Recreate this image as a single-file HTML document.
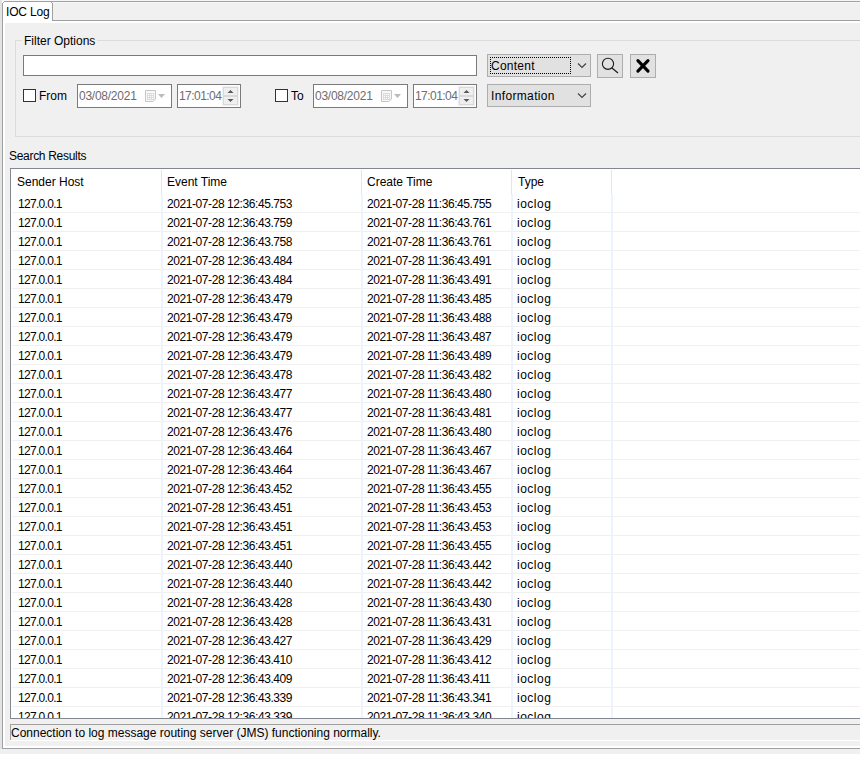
<!DOCTYPE html>
<html><head><meta charset="utf-8"><style>
html,body{margin:0;padding:0;}
body{width:864px;height:762px;position:relative;overflow:hidden;background:#fff;font-family:"Liberation Sans",sans-serif;}
body div{position:absolute;box-sizing:border-box;}
.t{font-size:12px;line-height:14px;white-space:nowrap;color:#000;}
.g{color:#6d6d6d;}
.d{letter-spacing:-0.42px;}
.ip{letter-spacing:-0.7px;}
</style></head><body>
<div style="left:0px;top:0px;width:2px;height:749px;background:#e3e3e3;"></div>
<div style="left:2px;top:0px;width:858px;height:1px;background:#f7f7f7;"></div>
<div style="left:0px;top:749px;width:860px;height:5px;background:#f0f0f0;"></div>
<div style="left:4px;top:1px;width:856px;height:1px;background:#a0a0a0;"></div>
<div style="left:2px;top:3px;width:1px;height:746px;background:#a0a0a0;"></div>
<div style="left:2px;top:748px;width:858px;height:1px;background:#a0a0a0;"></div>
<div style="left:3px;top:2px;width:49px;height:21px;background:#ffffff;"></div>
<div style="left:3px;top:21px;width:857px;height:2px;background:#ffffff;"></div>
<div style="left:3px;top:21px;width:2px;height:727px;background:#ffffff;"></div>
<div style="left:3px;top:746px;width:857px;height:2px;background:#ffffff;"></div>
<div style="left:5px;top:23px;width:855px;height:723px;background:#f0f0f0;"></div>
<div style="left:3px;top:2px;width:1px;height:1px;background:#a0a0a0;"></div>
<div style="left:52px;top:3px;width:808px;height:18px;background:#a0a0a0;"></div>
<div style="left:51px;top:2px;width:1px;height:1px;background:#a0a0a0;"></div>
<div style="left:52px;top:2px;width:1px;height:1px;background:#ececec;"></div>
<div style="left:53px;top:2px;width:807px;height:18px;background:#f0f0f0;"></div>
<div style="left:53px;top:2px;width:807px;height:1px;background:#f7f7f7;"></div>
<div class="t" style="left:6px;top:5px;letter-spacing:-0.15px">IOC Log</div>
<div style="left:15px;top:40px;width:7px;height:1px;background:#dcdcdc;"></div>
<div style="left:97px;top:40px;width:763px;height:1px;background:#dcdcdc;"></div>
<div style="left:15px;top:40px;width:1px;height:97px;background:#dcdcdc;"></div>
<div style="left:15px;top:136px;width:845px;height:1px;background:#dcdcdc;"></div>
<div class="t" style="left:24px;top:34px;">Filter Options</div>
<div style="left:23px;top:55px;width:454px;height:21px;background:#7a7a7a;"></div>
<div style="left:24px;top:56px;width:452px;height:19px;background:#ffffff;"></div>
<div style="left:487px;top:54px;width:104px;height:23px;background:#adadad;"></div>
<div style="left:488px;top:55px;width:102px;height:21px;background:#e1e1e1;"></div>
<div style="left:490px;top:57px;width:81px;height:17px;border:1px dotted #000;"></div>
<div class="t" style="left:491px;top:59px;letter-spacing:0.25px">Content</div>
<svg style="position:absolute;left:577px;top:62px" width="10" height="7"><path d="M1 1.5 L5 5.5 L9 1.5" fill="none" stroke="#404040" stroke-width="1.1"/></svg>
<div style="left:597px;top:54px;width:26px;height:24px;background:#adadad;"></div>
<div style="left:598px;top:55px;width:24px;height:22px;background:#e1e1e1;"></div>
<svg style="position:absolute;left:597px;top:54px" width="26" height="24"><circle cx="11" cy="9.8" r="5.6" fill="none" stroke="#1a1a1a" stroke-width="1.1"/><path d="M15 14 L21 19" stroke="#1a1a1a" stroke-width="1.2"/></svg>
<div style="left:630px;top:54px;width:26px;height:24px;background:#adadad;"></div>
<div style="left:631px;top:55px;width:24px;height:22px;background:#e1e1e1;"></div>
<svg style="position:absolute;left:630px;top:54px" width="26" height="24"><path d="M7.9 6.6 L18 17.1 M18 6.6 L7.9 17.1" stroke="#000" stroke-width="3.1" stroke-linecap="round"/></svg>
<div style="left:23px;top:89px;width:13px;height:13px;background:#333333;"></div>
<div style="left:24px;top:90px;width:11px;height:11px;background:#ffffff;"></div>
<div class="t" style="left:39px;top:89px;">From</div>
<div style="left:77px;top:84px;width:95px;height:24px;background:#7a7a7a;"></div>
<div style="left:78px;top:85px;width:93px;height:22px;background:#ffffff;"></div>
<div class="t g" style="left:79px;top:89px;letter-spacing:-0.25px">03/08/2021</div>
<svg style="position:absolute;left:144px;top:89px" width="22" height="14"><path d="M1.5 1.5H11.5V10L9 12.5H1.5Z" fill="#f6f8fc" stroke="#c9c3c3"/><rect x="3" y="4" width="7" height="7" fill="#dcdcdc"/><path d="M4 5h1v1h-1zM6 5h1v1h-1zM8 5h1v1h-1zM4 7h1v1h-1zM6 7h1v1h-1zM8 7h1v1h-1zM4 9h1v1h-1zM6 9h1v1h-1zM8 9h1v1h-1z" fill="#fff"/><path d="M14 5 L21 5 L17.5 9 Z" fill="#bbbcb4"/></svg>
<div style="left:177px;top:84px;width:64px;height:24px;background:#7a7a7a;"></div>
<div style="left:178px;top:85px;width:62px;height:22px;background:#ffffff;"></div>
<div class="t g" style="left:179px;top:89px;letter-spacing:-0.55px">17:01:04</div>
<div style="left:222px;top:86px;width:17px;height:20px;background:#f0f0f0;"></div>
<div style="left:223px;top:87px;width:15px;height:9px;background:#dadada;"></div>
<div style="left:224px;top:88px;width:13px;height:7px;background:#efefef;"></div>
<div style="left:223px;top:96px;width:15px;height:9px;background:#dadada;"></div>
<div style="left:224px;top:97px;width:13px;height:7px;background:#efefef;"></div>
<svg style="position:absolute;left:222px;top:86px" width="17" height="20"><path d="M5.5 7 L8.5 4 L11.5 7 Z" fill="#595959"/><path d="M5.5 13 L8.5 16 L11.5 13 Z" fill="#595959"/></svg>
<div style="left:275px;top:89px;width:13px;height:13px;background:#333333;"></div>
<div style="left:276px;top:90px;width:11px;height:11px;background:#ffffff;"></div>
<div class="t" style="left:291px;top:89px;">To</div>
<div style="left:313px;top:84px;width:95px;height:24px;background:#7a7a7a;"></div>
<div style="left:314px;top:85px;width:93px;height:22px;background:#ffffff;"></div>
<div class="t g" style="left:315px;top:89px;letter-spacing:-0.25px">03/08/2021</div>
<svg style="position:absolute;left:380px;top:89px" width="22" height="14"><path d="M1.5 1.5H11.5V10L9 12.5H1.5Z" fill="#f6f8fc" stroke="#c9c3c3"/><rect x="3" y="4" width="7" height="7" fill="#dcdcdc"/><path d="M4 5h1v1h-1zM6 5h1v1h-1zM8 5h1v1h-1zM4 7h1v1h-1zM6 7h1v1h-1zM8 7h1v1h-1zM4 9h1v1h-1zM6 9h1v1h-1zM8 9h1v1h-1z" fill="#fff"/><path d="M14 5 L21 5 L17.5 9 Z" fill="#bbbcb4"/></svg>
<div style="left:413px;top:84px;width:64px;height:24px;background:#7a7a7a;"></div>
<div style="left:414px;top:85px;width:62px;height:22px;background:#ffffff;"></div>
<div class="t g" style="left:415px;top:89px;letter-spacing:-0.55px">17:01:04</div>
<div style="left:458px;top:86px;width:17px;height:20px;background:#f0f0f0;"></div>
<div style="left:459px;top:87px;width:15px;height:9px;background:#dadada;"></div>
<div style="left:460px;top:88px;width:13px;height:7px;background:#efefef;"></div>
<div style="left:459px;top:96px;width:15px;height:9px;background:#dadada;"></div>
<div style="left:460px;top:97px;width:13px;height:7px;background:#efefef;"></div>
<svg style="position:absolute;left:458px;top:86px" width="17" height="20"><path d="M5.5 7 L8.5 4 L11.5 7 Z" fill="#595959"/><path d="M5.5 13 L8.5 16 L11.5 13 Z" fill="#595959"/></svg>
<div style="left:487px;top:84px;width:104px;height:23px;background:#adadad;"></div>
<div style="left:488px;top:85px;width:102px;height:21px;background:#e1e1e1;"></div>
<div class="t" style="left:491px;top:89px;letter-spacing:0.35px">Information</div>
<svg style="position:absolute;left:577px;top:92px" width="10" height="7"><path d="M1 1.5 L5 5.5 L9 1.5" fill="none" stroke="#404040" stroke-width="1.1"/></svg>
<div class="t" style="left:9px;top:149px;letter-spacing:-0.3px">Search Results</div>
<div style="left:10px;top:168px;width:850px;height:551px;background:#828790;"></div>
<div style="left:11px;top:169px;width:849px;height:549px;background:#ffffff;"></div>
<div style="left:12px;top:212px;width:848px;height:1px;background:#f0f0f0;"></div>
<div style="left:12px;top:231px;width:848px;height:1px;background:#f0f0f0;"></div>
<div style="left:12px;top:250px;width:848px;height:1px;background:#f0f0f0;"></div>
<div style="left:12px;top:269px;width:848px;height:1px;background:#f0f0f0;"></div>
<div style="left:12px;top:288px;width:848px;height:1px;background:#f0f0f0;"></div>
<div style="left:12px;top:307px;width:848px;height:1px;background:#f0f0f0;"></div>
<div style="left:12px;top:326px;width:848px;height:1px;background:#f0f0f0;"></div>
<div style="left:12px;top:345px;width:848px;height:1px;background:#f0f0f0;"></div>
<div style="left:12px;top:364px;width:848px;height:1px;background:#f0f0f0;"></div>
<div style="left:12px;top:383px;width:848px;height:1px;background:#f0f0f0;"></div>
<div style="left:12px;top:402px;width:848px;height:1px;background:#f0f0f0;"></div>
<div style="left:12px;top:421px;width:848px;height:1px;background:#f0f0f0;"></div>
<div style="left:12px;top:440px;width:848px;height:1px;background:#f0f0f0;"></div>
<div style="left:12px;top:459px;width:848px;height:1px;background:#f0f0f0;"></div>
<div style="left:12px;top:478px;width:848px;height:1px;background:#f0f0f0;"></div>
<div style="left:12px;top:497px;width:848px;height:1px;background:#f0f0f0;"></div>
<div style="left:12px;top:516px;width:848px;height:1px;background:#f0f0f0;"></div>
<div style="left:12px;top:535px;width:848px;height:1px;background:#f0f0f0;"></div>
<div style="left:12px;top:554px;width:848px;height:1px;background:#f0f0f0;"></div>
<div style="left:12px;top:573px;width:848px;height:1px;background:#f0f0f0;"></div>
<div style="left:12px;top:592px;width:848px;height:1px;background:#f0f0f0;"></div>
<div style="left:12px;top:611px;width:848px;height:1px;background:#f0f0f0;"></div>
<div style="left:12px;top:630px;width:848px;height:1px;background:#f0f0f0;"></div>
<div style="left:12px;top:649px;width:848px;height:1px;background:#f0f0f0;"></div>
<div style="left:12px;top:668px;width:848px;height:1px;background:#f0f0f0;"></div>
<div style="left:12px;top:687px;width:848px;height:1px;background:#f0f0f0;"></div>
<div style="left:12px;top:706px;width:848px;height:1px;background:#f0f0f0;"></div>
<div style="left:161px;top:170px;width:1px;height:24px;background:#e5e5e5;"></div>
<div style="left:161px;top:194px;width:2px;height:524px;background:#edf4fd;"></div>
<div style="left:361px;top:170px;width:1px;height:24px;background:#e5e5e5;"></div>
<div style="left:361px;top:194px;width:2px;height:524px;background:#edf4fd;"></div>
<div style="left:511px;top:170px;width:1px;height:24px;background:#e5e5e5;"></div>
<div style="left:511px;top:194px;width:2px;height:524px;background:#edf4fd;"></div>
<div style="left:611px;top:170px;width:1px;height:24px;background:#e5e5e5;"></div>
<div style="left:611px;top:194px;width:2px;height:524px;background:#edf4fd;"></div>
<div class="t" style="left:17px;top:175px;">Sender Host</div>
<div class="t" style="left:167px;top:175px;">Event Time</div>
<div class="t" style="left:367px;top:175px;">Create Time</div>
<div class="t" style="left:518px;top:175px;">Type</div>
<div style="left:11px;top:194px;width:849px;height:524px;overflow:hidden">
<div class="t ip" style="left:7px;top:3px">127.0.0.1</div><div class="t d" style="left:156px;top:3px">2021-07-28 12:36:45.753</div><div class="t d" style="left:356px;top:3px">2021-07-28 11:36:45.755</div><div class="t" style="left:506px;top:3px;letter-spacing:0.5px">ioclog</div>
<div class="t ip" style="left:7px;top:22px">127.0.0.1</div><div class="t d" style="left:156px;top:22px">2021-07-28 12:36:43.759</div><div class="t d" style="left:356px;top:22px">2021-07-28 11:36:43.761</div><div class="t" style="left:506px;top:22px;letter-spacing:0.5px">ioclog</div>
<div class="t ip" style="left:7px;top:41px">127.0.0.1</div><div class="t d" style="left:156px;top:41px">2021-07-28 12:36:43.758</div><div class="t d" style="left:356px;top:41px">2021-07-28 11:36:43.761</div><div class="t" style="left:506px;top:41px;letter-spacing:0.5px">ioclog</div>
<div class="t ip" style="left:7px;top:60px">127.0.0.1</div><div class="t d" style="left:156px;top:60px">2021-07-28 12:36:43.484</div><div class="t d" style="left:356px;top:60px">2021-07-28 11:36:43.491</div><div class="t" style="left:506px;top:60px;letter-spacing:0.5px">ioclog</div>
<div class="t ip" style="left:7px;top:79px">127.0.0.1</div><div class="t d" style="left:156px;top:79px">2021-07-28 12:36:43.484</div><div class="t d" style="left:356px;top:79px">2021-07-28 11:36:43.491</div><div class="t" style="left:506px;top:79px;letter-spacing:0.5px">ioclog</div>
<div class="t ip" style="left:7px;top:98px">127.0.0.1</div><div class="t d" style="left:156px;top:98px">2021-07-28 12:36:43.479</div><div class="t d" style="left:356px;top:98px">2021-07-28 11:36:43.485</div><div class="t" style="left:506px;top:98px;letter-spacing:0.5px">ioclog</div>
<div class="t ip" style="left:7px;top:117px">127.0.0.1</div><div class="t d" style="left:156px;top:117px">2021-07-28 12:36:43.479</div><div class="t d" style="left:356px;top:117px">2021-07-28 11:36:43.488</div><div class="t" style="left:506px;top:117px;letter-spacing:0.5px">ioclog</div>
<div class="t ip" style="left:7px;top:136px">127.0.0.1</div><div class="t d" style="left:156px;top:136px">2021-07-28 12:36:43.479</div><div class="t d" style="left:356px;top:136px">2021-07-28 11:36:43.487</div><div class="t" style="left:506px;top:136px;letter-spacing:0.5px">ioclog</div>
<div class="t ip" style="left:7px;top:155px">127.0.0.1</div><div class="t d" style="left:156px;top:155px">2021-07-28 12:36:43.479</div><div class="t d" style="left:356px;top:155px">2021-07-28 11:36:43.489</div><div class="t" style="left:506px;top:155px;letter-spacing:0.5px">ioclog</div>
<div class="t ip" style="left:7px;top:174px">127.0.0.1</div><div class="t d" style="left:156px;top:174px">2021-07-28 12:36:43.478</div><div class="t d" style="left:356px;top:174px">2021-07-28 11:36:43.482</div><div class="t" style="left:506px;top:174px;letter-spacing:0.5px">ioclog</div>
<div class="t ip" style="left:7px;top:193px">127.0.0.1</div><div class="t d" style="left:156px;top:193px">2021-07-28 12:36:43.477</div><div class="t d" style="left:356px;top:193px">2021-07-28 11:36:43.480</div><div class="t" style="left:506px;top:193px;letter-spacing:0.5px">ioclog</div>
<div class="t ip" style="left:7px;top:212px">127.0.0.1</div><div class="t d" style="left:156px;top:212px">2021-07-28 12:36:43.477</div><div class="t d" style="left:356px;top:212px">2021-07-28 11:36:43.481</div><div class="t" style="left:506px;top:212px;letter-spacing:0.5px">ioclog</div>
<div class="t ip" style="left:7px;top:231px">127.0.0.1</div><div class="t d" style="left:156px;top:231px">2021-07-28 12:36:43.476</div><div class="t d" style="left:356px;top:231px">2021-07-28 11:36:43.480</div><div class="t" style="left:506px;top:231px;letter-spacing:0.5px">ioclog</div>
<div class="t ip" style="left:7px;top:250px">127.0.0.1</div><div class="t d" style="left:156px;top:250px">2021-07-28 12:36:43.464</div><div class="t d" style="left:356px;top:250px">2021-07-28 11:36:43.467</div><div class="t" style="left:506px;top:250px;letter-spacing:0.5px">ioclog</div>
<div class="t ip" style="left:7px;top:269px">127.0.0.1</div><div class="t d" style="left:156px;top:269px">2021-07-28 12:36:43.464</div><div class="t d" style="left:356px;top:269px">2021-07-28 11:36:43.467</div><div class="t" style="left:506px;top:269px;letter-spacing:0.5px">ioclog</div>
<div class="t ip" style="left:7px;top:288px">127.0.0.1</div><div class="t d" style="left:156px;top:288px">2021-07-28 12:36:43.452</div><div class="t d" style="left:356px;top:288px">2021-07-28 11:36:43.455</div><div class="t" style="left:506px;top:288px;letter-spacing:0.5px">ioclog</div>
<div class="t ip" style="left:7px;top:307px">127.0.0.1</div><div class="t d" style="left:156px;top:307px">2021-07-28 12:36:43.451</div><div class="t d" style="left:356px;top:307px">2021-07-28 11:36:43.453</div><div class="t" style="left:506px;top:307px;letter-spacing:0.5px">ioclog</div>
<div class="t ip" style="left:7px;top:326px">127.0.0.1</div><div class="t d" style="left:156px;top:326px">2021-07-28 12:36:43.451</div><div class="t d" style="left:356px;top:326px">2021-07-28 11:36:43.453</div><div class="t" style="left:506px;top:326px;letter-spacing:0.5px">ioclog</div>
<div class="t ip" style="left:7px;top:345px">127.0.0.1</div><div class="t d" style="left:156px;top:345px">2021-07-28 12:36:43.451</div><div class="t d" style="left:356px;top:345px">2021-07-28 11:36:43.455</div><div class="t" style="left:506px;top:345px;letter-spacing:0.5px">ioclog</div>
<div class="t ip" style="left:7px;top:364px">127.0.0.1</div><div class="t d" style="left:156px;top:364px">2021-07-28 12:36:43.440</div><div class="t d" style="left:356px;top:364px">2021-07-28 11:36:43.442</div><div class="t" style="left:506px;top:364px;letter-spacing:0.5px">ioclog</div>
<div class="t ip" style="left:7px;top:383px">127.0.0.1</div><div class="t d" style="left:156px;top:383px">2021-07-28 12:36:43.440</div><div class="t d" style="left:356px;top:383px">2021-07-28 11:36:43.442</div><div class="t" style="left:506px;top:383px;letter-spacing:0.5px">ioclog</div>
<div class="t ip" style="left:7px;top:402px">127.0.0.1</div><div class="t d" style="left:156px;top:402px">2021-07-28 12:36:43.428</div><div class="t d" style="left:356px;top:402px">2021-07-28 11:36:43.430</div><div class="t" style="left:506px;top:402px;letter-spacing:0.5px">ioclog</div>
<div class="t ip" style="left:7px;top:421px">127.0.0.1</div><div class="t d" style="left:156px;top:421px">2021-07-28 12:36:43.428</div><div class="t d" style="left:356px;top:421px">2021-07-28 11:36:43.431</div><div class="t" style="left:506px;top:421px;letter-spacing:0.5px">ioclog</div>
<div class="t ip" style="left:7px;top:440px">127.0.0.1</div><div class="t d" style="left:156px;top:440px">2021-07-28 12:36:43.427</div><div class="t d" style="left:356px;top:440px">2021-07-28 11:36:43.429</div><div class="t" style="left:506px;top:440px;letter-spacing:0.5px">ioclog</div>
<div class="t ip" style="left:7px;top:459px">127.0.0.1</div><div class="t d" style="left:156px;top:459px">2021-07-28 12:36:43.410</div><div class="t d" style="left:356px;top:459px">2021-07-28 11:36:43.412</div><div class="t" style="left:506px;top:459px;letter-spacing:0.5px">ioclog</div>
<div class="t ip" style="left:7px;top:478px">127.0.0.1</div><div class="t d" style="left:156px;top:478px">2021-07-28 12:36:43.409</div><div class="t d" style="left:356px;top:478px">2021-07-28 11:36:43.411</div><div class="t" style="left:506px;top:478px;letter-spacing:0.5px">ioclog</div>
<div class="t ip" style="left:7px;top:497px">127.0.0.1</div><div class="t d" style="left:156px;top:497px">2021-07-28 12:36:43.339</div><div class="t d" style="left:356px;top:497px">2021-07-28 11:36:43.341</div><div class="t" style="left:506px;top:497px;letter-spacing:0.5px">ioclog</div>
<div class="t ip" style="left:7px;top:516px">127.0.0.1</div><div class="t d" style="left:156px;top:516px">2021-07-28 12:36:43.339</div><div class="t d" style="left:356px;top:516px">2021-07-28 11:36:43.340</div><div class="t" style="left:506px;top:516px;letter-spacing:0.5px">ioclog</div>
</div>
<div style="left:10px;top:724px;width:850px;height:16px;background:#a0a0a0;"></div>
<div style="left:11px;top:725px;width:849px;height:15px;background:#f0f0f0;"></div>
<div style="left:10px;top:740px;width:850px;height:1px;background:#ffffff;"></div>
<div class="t" style="left:11px;top:726px;">Connection to log message routing server (JMS) functioning normally.</div>
</body></html>
